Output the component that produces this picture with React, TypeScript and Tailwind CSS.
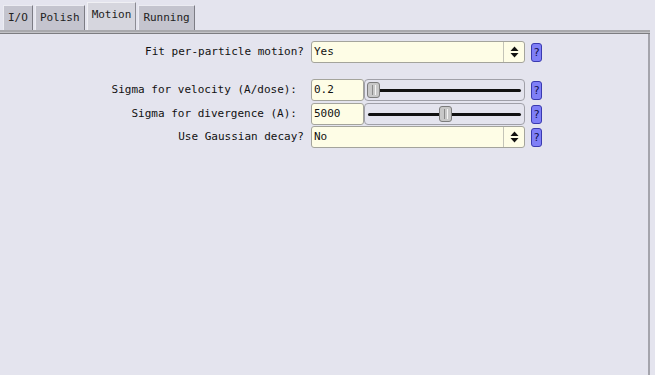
import React from 'react';

const font = { fontFamily: '"DejaVu Sans Mono", "Liberation Mono", monospace' };

const HelpButton = () => (
  <div className="ml-[6px] flex h-[19px] w-[11px] items-center justify-center rounded-[3px] border border-[#3a3ab0] bg-[#7f7ff7] text-[11px] leading-none text-[#10104a]">
    ?
  </div>
);

const UpDown = () => (
  <svg width="9" height="12" viewBox="0 0 9 12">
    <path d="M4.5 0.5 L8.5 5 L0.5 5 Z" fill="#111" />
    <path d="M0.5 7 L8.5 7 L4.5 11.5 Z" fill="#111" />
  </svg>
);

const SelectRow = ({ label, value }: { label: string; value: string }) => (
  <div className="flex h-[22px] items-center">
    <div className="w-[304px] text-right text-[11px] text-[#111]">{label}</div>
    <div className="ml-[7px] flex h-[22px] w-[214px] items-center rounded-[3px] border border-[#a4a49c] bg-[#fefde6]">
      <div className="flex-1 pl-[2px] text-[11px] text-[#111]">{value}</div>
      <div className="flex h-full w-[21px] items-center justify-center border-l border-[#c4c4b8]">
        <UpDown />
      </div>
    </div>
    <HelpButton />
  </div>
);

const SliderRow = ({ label, value, pos }: { label: string; value: string; pos: number }) => (
  <div className="flex h-[22px] items-center">
    <div className="w-[304px] pr-[7px] text-right text-[11px] text-[#111]">{label}</div>
    <div className="ml-[7px] flex h-[22px] w-[53px] items-center rounded-[3px] border border-[#a4a49c] bg-[#fefde6] pl-[2px] text-[11px] text-[#111]">
      {value}
    </div>
    <div className="relative h-[22px] w-[161px] rounded-[4px] border border-[#a0a0a8] bg-[#e4e4ee]">
      <div className="absolute left-[3px] right-[3px] top-[9px] h-[3px] rounded-full bg-[#111]" />
      <div
        className="absolute top-[2px] flex h-[16px] w-[13px] items-center justify-center gap-[2px] rounded-[3px] border border-[#7c7c7c] bg-[#c8c8c8]"
        style={{ left: pos }}
      >
        <div className="h-[10px] w-px bg-[#8a8a8a]" />
        <div className="h-[10px] w-px bg-[#f4f4f4]" />
      </div>
    </div>
    <HelpButton />
  </div>
);

export default function App() {
  const tabs = ['I/O', 'Polish', 'Motion', 'Running'];
  return (
    <div className="h-[375px] w-[655px] overflow-hidden bg-[#e4e4ee]" style={font}>
      <div className="flex h-[30px] items-end gap-[2px] pl-[3px]">
        {tabs.map((t) =>
          t === 'Motion' ? (
            <div
              key={t}
              className="flex h-[28px] items-center border-l border-r border-t border-l-[#f0f0f4] border-r-[#8c8c94] border-t-[#f0f0f4] bg-[#d6d6de] px-[4px] pb-[2px] text-[11px] text-[#222]"
            >
              {t}
            </div>
          ) : (
            <div
              key={t}
              className="flex h-[25px] items-center border-l border-r border-t border-l-[#ececf2] border-r-[#7c7c84] border-t-[#ececf2] bg-[#c4c4ce] px-[4px] text-[11px] text-[#222]"
            >
              {t}
            </div>
          )
        )}
      </div>
      <div className="w-[650px]">
        <div className="h-[2px] bg-[#a8a8ac]" />
        <div className="h-px bg-[#c2c2c6]" />
        <div className="h-px bg-[#7c7c80]" />
      </div>
      <div className="h-[341px] w-[650px] border-r-2 border-[#a4a4ac] pt-[7px]">
        <SelectRow label="Fit per-particle motion?" value="Yes" />
        <div className="mt-[16px]">
          <SliderRow label="Sigma for velocity (A/dose):" value="0.2" pos={2} />
        </div>
        <div className="mt-[2px]">
          <SliderRow label="Sigma for divergence (A):" value="5000" pos={74} />
        </div>
        <div className="mt-[1px]">
          <SelectRow label="Use Gaussian decay?" value="No" />
        </div>
      </div>
    </div>
  );
}
